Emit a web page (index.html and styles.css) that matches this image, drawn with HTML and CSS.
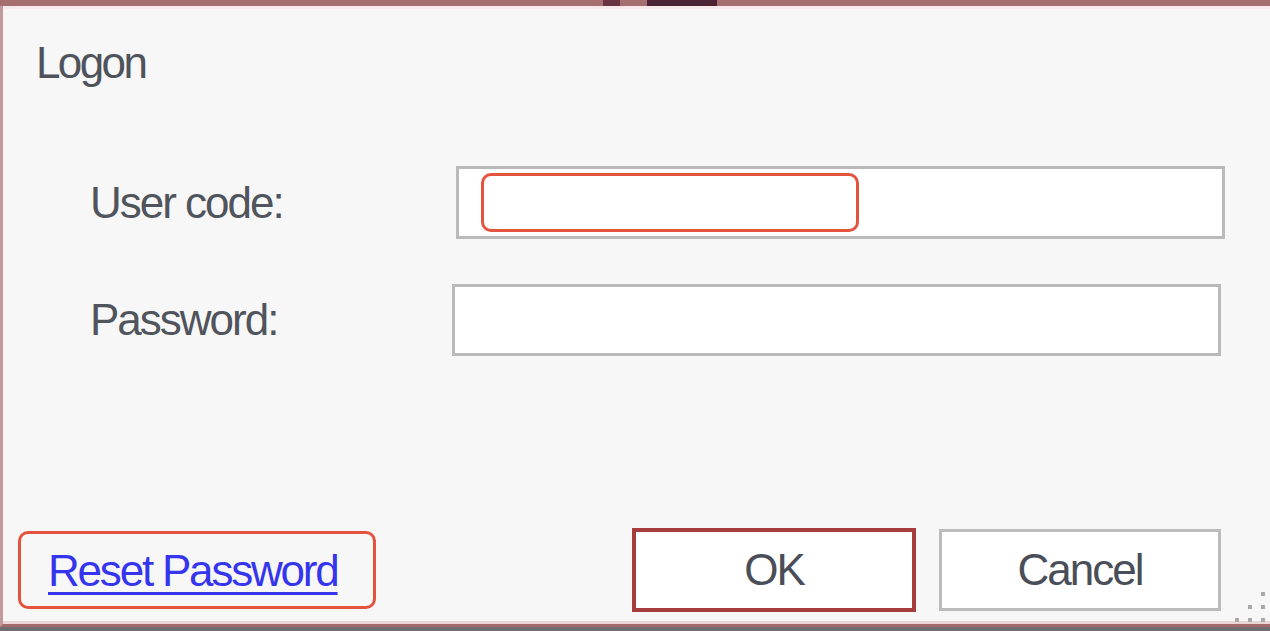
FILE: index.html
```html
<!DOCTYPE html>
<html lang="en">
<head>
    <meta charset="UTF-8">
    <meta name="viewport" content="width=device-width, initial-scale=1.0">
    <title>Logon</title>
    <link rel="stylesheet" href="styles.css">
</head>
<body>
    <div class="frame-edge"></div>
    <div class="window">
        <h1 class="title">Logon</h1>

        <form class="logon-form" onsubmit="return false;">
            <div class="field">
                <label for="user_code">User code:</label>
                <div class="text-box" id="user_code">
                    <span class="mark"></span>
                </div>
            </div>
            <div class="field">
                <label for="password">Password:</label>
                <div class="text-box text-box--pw" id="password"></div>
            </div>
        </form>

        <div class="footer">
            <div class="mark mark--link">
                <a href="#" class="reset-link">Reset Password</a>
            </div>
            <div class="buttons">
                <button type="submit" class="btn btn--default">OK</button>
                <button type="button" class="btn">Cancel</button>
            </div>
        </div>

        <svg class="grip" width="34" height="34" viewBox="0 0 34 34">
            <rect x="27" y="2" width="4" height="4" fill="#a9a9a9"/>
            <rect x="14" y="15" width="4" height="4" fill="#a9a9a9"/>
            <rect x="27" y="15" width="4" height="4" fill="#a9a9a9"/>
            <rect x="1" y="28" width="4" height="4" fill="#a9a9a9"/>
            <rect x="14" y="28" width="4" height="4" fill="#a9a9a9"/>
            <rect x="27" y="28" width="4" height="4" fill="#a9a9a9"/>
        </svg>
    </div>
</body>
</html>
```

FILE: styles.css
```css
/* General Reset */
* {
    margin: 0;
    padding: 0;
    box-sizing: border-box;
}

body {
    font-family: 'Liberation Sans', Arial, sans-serif;
    background-color: #6f6f72;
    color: #4f535c;
    width: 1270px;
    height: 631px;
    overflow: hidden;
}

/* reddish frame along the top, with the darker spots of the window above */
.frame-edge {
    height: 6px;
    background: linear-gradient(to right,
        #a66e6e 0 603px,
        #6a3442 603px 620px,
        #a66e6e 620px 647px,
        #4c2334 647px 717px,
        #a66e6e 717px);
}

.window {
    position: relative;
    height: 621px;
    display: flex;
    flex-direction: column;
    padding: 35px 49px 12px 15px;
    background-color: #f7f7f7;
    border-left: 3px solid #c29a9a;
    border-bottom: 3px solid #a46a6a;
    box-shadow: inset 0 3px #f8eaea, inset 0 -3px #ead6d6;
}

.title {
    margin-left: 18px;
    font-size: 44px;
    font-weight: normal;
    line-height: 44px;
    letter-spacing: -2.6px;
    color: #4f535c;
}

.logon-form {
    margin: 81px 0 0 72px;
    display: flex;
    flex-direction: column;
    gap: 45px;
}

.field {
    display: grid;
    grid-template-columns: 366px 769px;
    align-items: center;
}

label {
    font-size: 44px;
    line-height: 44px;
    letter-spacing: -2px;
    color: #50545c;
}

.text-box {
    width: 769px;
    height: 73px;
    padding: 4px 0 0 22px;
    background-color: #ffffff;
    border: 3px solid #bababa;
}

.text-box--pw {
    height: 72px;
    margin-left: -4px;
}

/* red annotation boxes */
.mark {
    display: block;
    width: 378px;
    height: 59px;
    border: 3px solid #e4533f;
    border-radius: 10px;
}

.mark--link {
    width: 358px;
    height: 78px;
    padding: 0 0 0 27px;
    display: flex;
    align-items: center;
}

.footer {
    margin-top: auto;
    display: flex;
    justify-content: space-between;
    align-items: center;
}

.reset-link {
    font-size: 44px;
    line-height: 44px;
    letter-spacing: -2.2px;
    color: #3535ee;
    text-decoration: underline;
    text-decoration-thickness: 3px;
    text-underline-offset: 6px;
    margin-top: 2px;
}

.buttons {
    display: flex;
    align-items: center;
    gap: 23px;
}

.btn {
    width: 282px;
    height: 82px;
    font-family: inherit;
    font-size: 44px;
    letter-spacing: -2px;
    color: #4a4e58;
    background-color: #ffffff;
    border: 3px solid #bcbcbc;
}

.btn--default {
    width: 284px;
    height: 84px;
    border: 4px solid #a63c3c;
}

.grip {
    position: absolute;
    right: 2px;
    bottom: 0;
}
```
